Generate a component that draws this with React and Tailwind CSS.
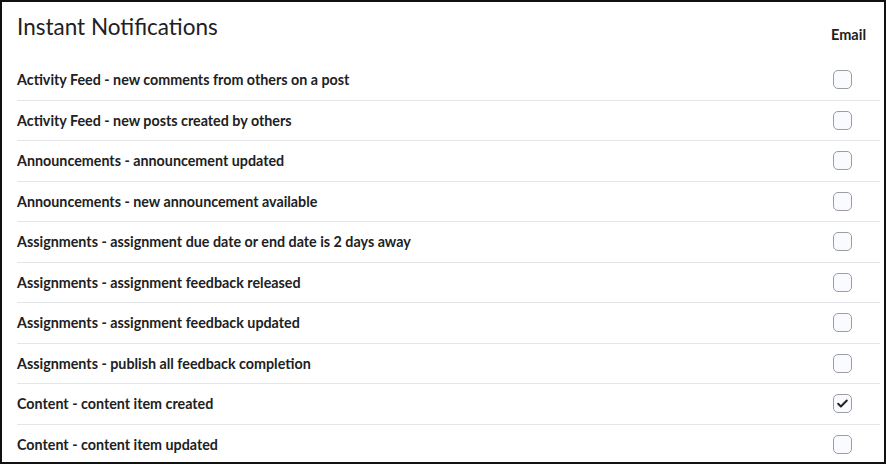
const rows = [
  { label: "Activity Feed - new comments from others on a post" },
  { label: "Activity Feed - new posts created by others" },
  { label: "Announcements - announcement updated" },
  { label: "Announcements - new announcement available" },
  { label: "Assignments - assignment due date or end date is 2 days away" },
  { label: "Assignments - assignment feedback released" },
  { label: "Assignments - assignment feedback updated" },
  { label: "Assignments - publish all feedback completion" },
  { label: "Content - content item created", checked: true },
  { label: "Content - content item updated" },
];

function Checkbox({ checked }) {
  return (
    <div className="w-[19px] h-[19px] rounded-[5px] border border-[#9a9ea3] bg-[#f9fbff] flex items-center justify-center">
      {checked && (
        <svg width="13" height="13" viewBox="0 0 24 24" fill="none">
          <path d="M4 12.5l5 5L20 6.5" stroke="#202122" strokeWidth="3.6" strokeLinecap="round" strokeLinejoin="round" />
        </svg>
      )}
    </div>
  );
}

export default function App() {
  return (
    <div className="w-[886px] h-[464px] overflow-hidden bg-white border-2 border-[#111] text-[#202122] font-['Lato','Liberation_Sans',sans-serif] flex flex-col">
      <div className="h-[58px] flex justify-between shrink-0">
        <h1 className="ml-[15px] mt-[11px] text-[22.5px] leading-[27px] font-normal">Instant Notifications</h1>
        <div className="mr-[18px] mt-[24px] text-[14.5px] leading-[17px] font-bold">Email</div>
      </div>
      {rows.map((r) => (
        <div
          key={r.label}
          className="ml-[15px] mr-[4px] h-[40.5px] shrink-0 border-b border-[#e3e5e8] last:border-b-0 flex items-center justify-between pr-[28px]"
        >
          <span className="text-[14.3px] font-bold">{r.label}</span>
          <Checkbox checked={r.checked} />
        </div>
      ))}
    </div>
  );
}
